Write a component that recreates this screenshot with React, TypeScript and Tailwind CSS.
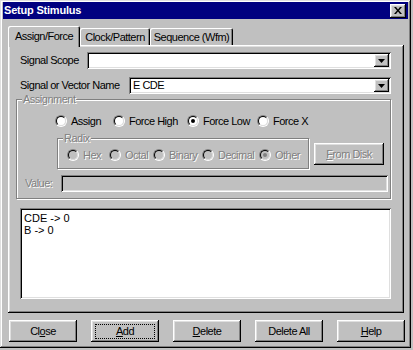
import { ReactNode } from "react";

const raised =
  "shadow-[inset_-1px_-1px_0_#000,inset_1px_1px_0_#fff,inset_-2px_-2px_0_#808080,inset_2px_2px_0_#dfdfdf]";
const sunken =
  "shadow-[inset_1px_1px_0_#808080,inset_-1px_-1px_0_#fff,inset_2px_2px_0_#000,inset_-2px_-2px_0_#dfdfdf]";
const dim = "text-[#808080] [text-shadow:1px_1px_0_#fff]";

const Radio = ({ checked, disabled }: { checked?: boolean; disabled?: boolean }) => (
  <span className="flex w-3 h-3 shrink-0 rounded-full border border-t-[#808080] border-l-[#808080] border-r-white border-b-white">
    <span
      className={`flex flex-1 items-center justify-center rounded-full border border-t-black border-l-black border-r-[#dfdfdf] border-b-[#dfdfdf] ${
        disabled ? "bg-[#c0c0c0]" : "bg-white"
      }`}
    >
      {checked && (
        <span className={`w-1 h-1 rounded-full ${disabled ? "bg-[#808080]" : "bg-black"}`} />
      )}
    </span>
  </span>
);

const RadioItem = ({
  label,
  width,
  checked,
  disabled,
}: {
  label: string;
  width: string;
  checked?: boolean;
  disabled?: boolean;
}) => (
  <div className={`flex items-center gap-[4px] ${width}`}>
    <Radio checked={checked} disabled={disabled} />
    <span className={disabled ? dim : "text-black"}>{label}</span>
  </div>
);

const DropButton = () => (
  <div className={`flex self-stretch items-center justify-center w-[15px] bg-[#c0c0c0] ${raised}`}>
    <svg width="7" height="4" viewBox="0 0 7 4">
      <path d="M0 0h7L3.5 4z" fill="#000" />
    </svg>
  </div>
);

const Button = ({
  children,
  focused,
  className = "",
}: {
  children: ReactNode;
  focused?: boolean;
  className?: string;
}) => (
  <div
    className={`flex items-center justify-center w-[68px] h-[22px] bg-[#c0c0c0] ${raised} ${className}`}
  >
    <div
      className={`flex items-center justify-center w-[60px] h-[15px] ${
        focused ? "border border-dotted border-black" : ""
      }`}
    >
      {children}
    </div>
  </div>
);

const GroupLabel = ({ children }: { children: ReactNode }) => (
  <span className={`absolute -top-[7px] left-[5px] px-[1px] bg-[#c0c0c0] leading-[13px] ${dim}`}>
    {children}
  </span>
);

export default function App() {
  return (
    <div className="w-[413px] h-[350px] bg-[#c0c0c0] font-['Liberation_Sans',Arial,sans-serif] text-[11px] leading-[13px] tracking-[-0.5px] text-black">
      <div
        className={`flex flex-col w-[411px] h-[348px] px-[3px] pt-[2px] bg-[#c0c0c0] shadow-[inset_-1px_-1px_0_#000,inset_1px_1px_0_#dfdfdf,inset_-2px_-2px_0_#808080,inset_2px_2px_0_#fff]`}
      >
        {/* title bar */}
        <div className="flex items-center h-[17px] bg-[#000080] pl-[1px] pr-[2px]">
          <span className="flex-1 text-white font-bold text-[11px] tracking-[-0.2px]">
            Setup Stimulus
          </span>
          <div className={`flex items-center justify-center w-[16px] h-[14px] bg-[#c0c0c0] ${raised}`}>
            <svg width="8" height="7" viewBox="0 0 8 7">
              <path
                d="M0 0h2l2 2.4L6 0h2L5 3.5 8 7H6L4 4.6 2 7H0l3-3.5z"
                fill="#000"
              />
            </svg>
          </div>
        </div>

        {/* tabs */}
        <div className="flex items-end h-[19px] mt-[7px] ml-[5px]">
          <div className="relative z-10 flex justify-center w-[72px] h-[21px] -mb-[2px] pt-[4px] bg-[#c0c0c0] rounded-t-[2px] shadow-[inset_1px_1px_0_#fff,inset_-1px_0_0_#000,inset_-2px_0_0_#808080]">
            Assign/Force
          </div>
          <div className="flex justify-center w-[70px] h-[17px] pt-[3px] rounded-t-[2px] shadow-[inset_1px_1px_0_#fff,inset_-1px_0_0_#000,inset_-2px_0_0_#808080]">
            Clock/Pattern
          </div>
          <div className="flex justify-center w-[83px] h-[17px] pt-[3px] rounded-t-[2px] shadow-[inset_1px_1px_0_#fff,inset_-1px_0_0_#000,inset_-2px_0_0_#808080]">
            Sequence (Wfm)
          </div>
        </div>

        {/* panel */}
        <div className={`flex flex-col w-[396px] h-[268px] ml-[5px] pl-[12px] pr-[13px] ${raised}`}>
          <div className="flex items-center mt-[7px] h-[17px]">
            <span className="flex-1">Signal Scope</span>
            <div className={`flex justify-end w-[304px] h-[17px] p-[2px] bg-white ${sunken}`}>
              <DropButton />
            </div>
          </div>
          <div className="flex items-center mt-[8px] h-[17px]">
            <span className="flex-1">Signal or Vector Name</span>
            <div className={`flex items-center w-[262px] h-[17px] p-[2px] bg-white ${sunken}`}>
              <span className="flex-1 pl-[2px]">E CDE</span>
              <DropButton />
            </div>
          </div>

          {/* assignment group */}
          <div className="relative -ml-[4px] mt-[5px] w-[375px] h-[100px] border border-[#808080] shadow-[1px_1px_0_#fff,inset_1px_1px_0_#fff]">
            <GroupLabel>Assignment</GroupLabel>
            <div className="flex items-center h-[12px] mt-[15px] ml-[38px]">
              <RadioItem label="Assign" width="w-[58px]" />
              <RadioItem label="Force High" width="w-[74px]" />
              <RadioItem label="Force Low" width="w-[70px]" checked />
              <RadioItem label="Force X" width="w-[60px]" />
            </div>
            <div className="flex items-start mt-[11px] ml-[40px]">
              <div className="relative w-[252px] h-[31px] border border-[#808080] shadow-[1px_1px_0_#fff,inset_1px_1px_0_#fff]">
                <GroupLabel>Radix</GroupLabel>
                <div className="flex items-center h-[12px] mt-[10px] ml-[9px]">
                  <RadioItem label="Hex" width="w-[42px]" disabled />
                  <RadioItem label="Octal" width="w-[44px]" disabled />
                  <RadioItem label="Binary" width="w-[49px]" disabled />
                  <RadioItem label="Decimal" width="w-[57px]" disabled />
                  <RadioItem label="Other" width="w-[40px]" checked disabled />
                </div>
              </div>
              <Button className="ml-[5px] mt-[5px] w-[70px] h-[21px]">
                <span className={dim}>
                  <span className="underline">F</span>rom Disk
                </span>
              </Button>
            </div>
            <div className="flex items-center mt-[6px] ml-[8px] h-[17px]">
              <span className={`flex-1 ${dim}`}>Value:</span>
              <div className={`w-[327px] h-[17px] mr-[2px] bg-[#c0c0c0] ${sunken}`} />
            </div>
          </div>

          {/* list */}
          <div className={`mt-[9px] w-[371px] h-[91px] pl-[4px] pt-[4px] bg-white leading-[12px] tracking-[0px] ${sunken}`}>
            <div>CDE -&gt; 0</div>
            <div>B -&gt; 0</div>
          </div>
        </div>

        {/* buttons */}
        <div className="flex gap-[14px] mt-[7px] ml-[6px]">
          <Button>
            Cl<span className="underline">o</span>se
          </Button>
          <Button focused>
            <span className="underline">A</span>dd
          </Button>
          <Button>
            <span className="underline">D</span>elete
          </Button>
          <Button>Delete All</Button>
          <Button>
            <span className="underline">H</span>elp
          </Button>
        </div>
      </div>
    </div>
  );
}
